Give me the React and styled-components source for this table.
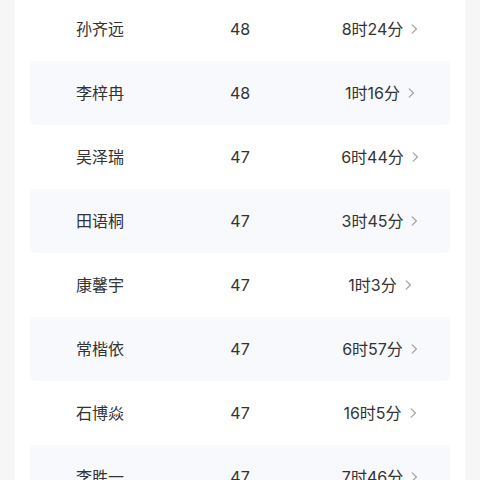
import React from "react";
import styled, { createGlobalStyle } from "styled-components";

const Global = createGlobalStyle`
  html, body { margin: 0; padding: 0; background: #f6f6f6; }
  body { font-family: Inter, "Noto Sans CJK SC", sans-serif; overflow: hidden; }
`;

const Page = styled.div`
  width: 480px;
  height: 480px;
  overflow: hidden;
  padding: 0 15px;
  box-sizing: border-box;
`;

const Card = styled.div`
  background: #ffffff;
  margin-top: -3px;
  padding: 0 15px 20px;
`;

const Row = styled.div`
  display: grid;
  grid-template-columns: 1fr 1fr 1fr;
  align-items: center;
  height: 64px;
  background: ${(p) => (p.$striped ? "#f8f9fc" : "#ffffff")};
  border-radius: 4px;
  color: #333333;
  font-size: 16px;
`;

const Cell = styled.div`
  display: flex;
  justify-content: center;
  align-items: center;
  gap: 8px;
  line-height: 1;
`;

const Chevron = () => (
  <svg width="7" height="12" viewBox="0 0 7 12">
    <polyline points="1.2,1.8 5.4,6 1.2,10.2" fill="none" stroke="#a3a3a3" strokeWidth="1.2" strokeLinecap="round" strokeLinejoin="round" />
  </svg>
);

const data = [
  ["孙齐远", 48, "8时24分"],
  ["李梓冉", 48, "1时16分"],
  ["吴泽瑞", 47, "6时44分"],
  ["田语桐", 47, "3时45分"],
  ["康馨宇", 47, "1时3分"],
  ["常楷依", 47, "6时57分"],
  ["石博焱", 47, "16时5分"],
  ["李胜一", 47, "7时46分"],
];

export default function App() {
  return (
    <>
      <Global />
      <Page>
        <Card>
          {data.map(([name, n, t], i) => (
            <Row key={i} $striped={i % 2 === 1}>
              <Cell>{name}</Cell>
              <Cell>{n}</Cell>
              <Cell>
                {t}
                <Chevron />
              </Cell>
            </Row>
          ))}
        </Card>
      </Page>
    </>
  );
}
